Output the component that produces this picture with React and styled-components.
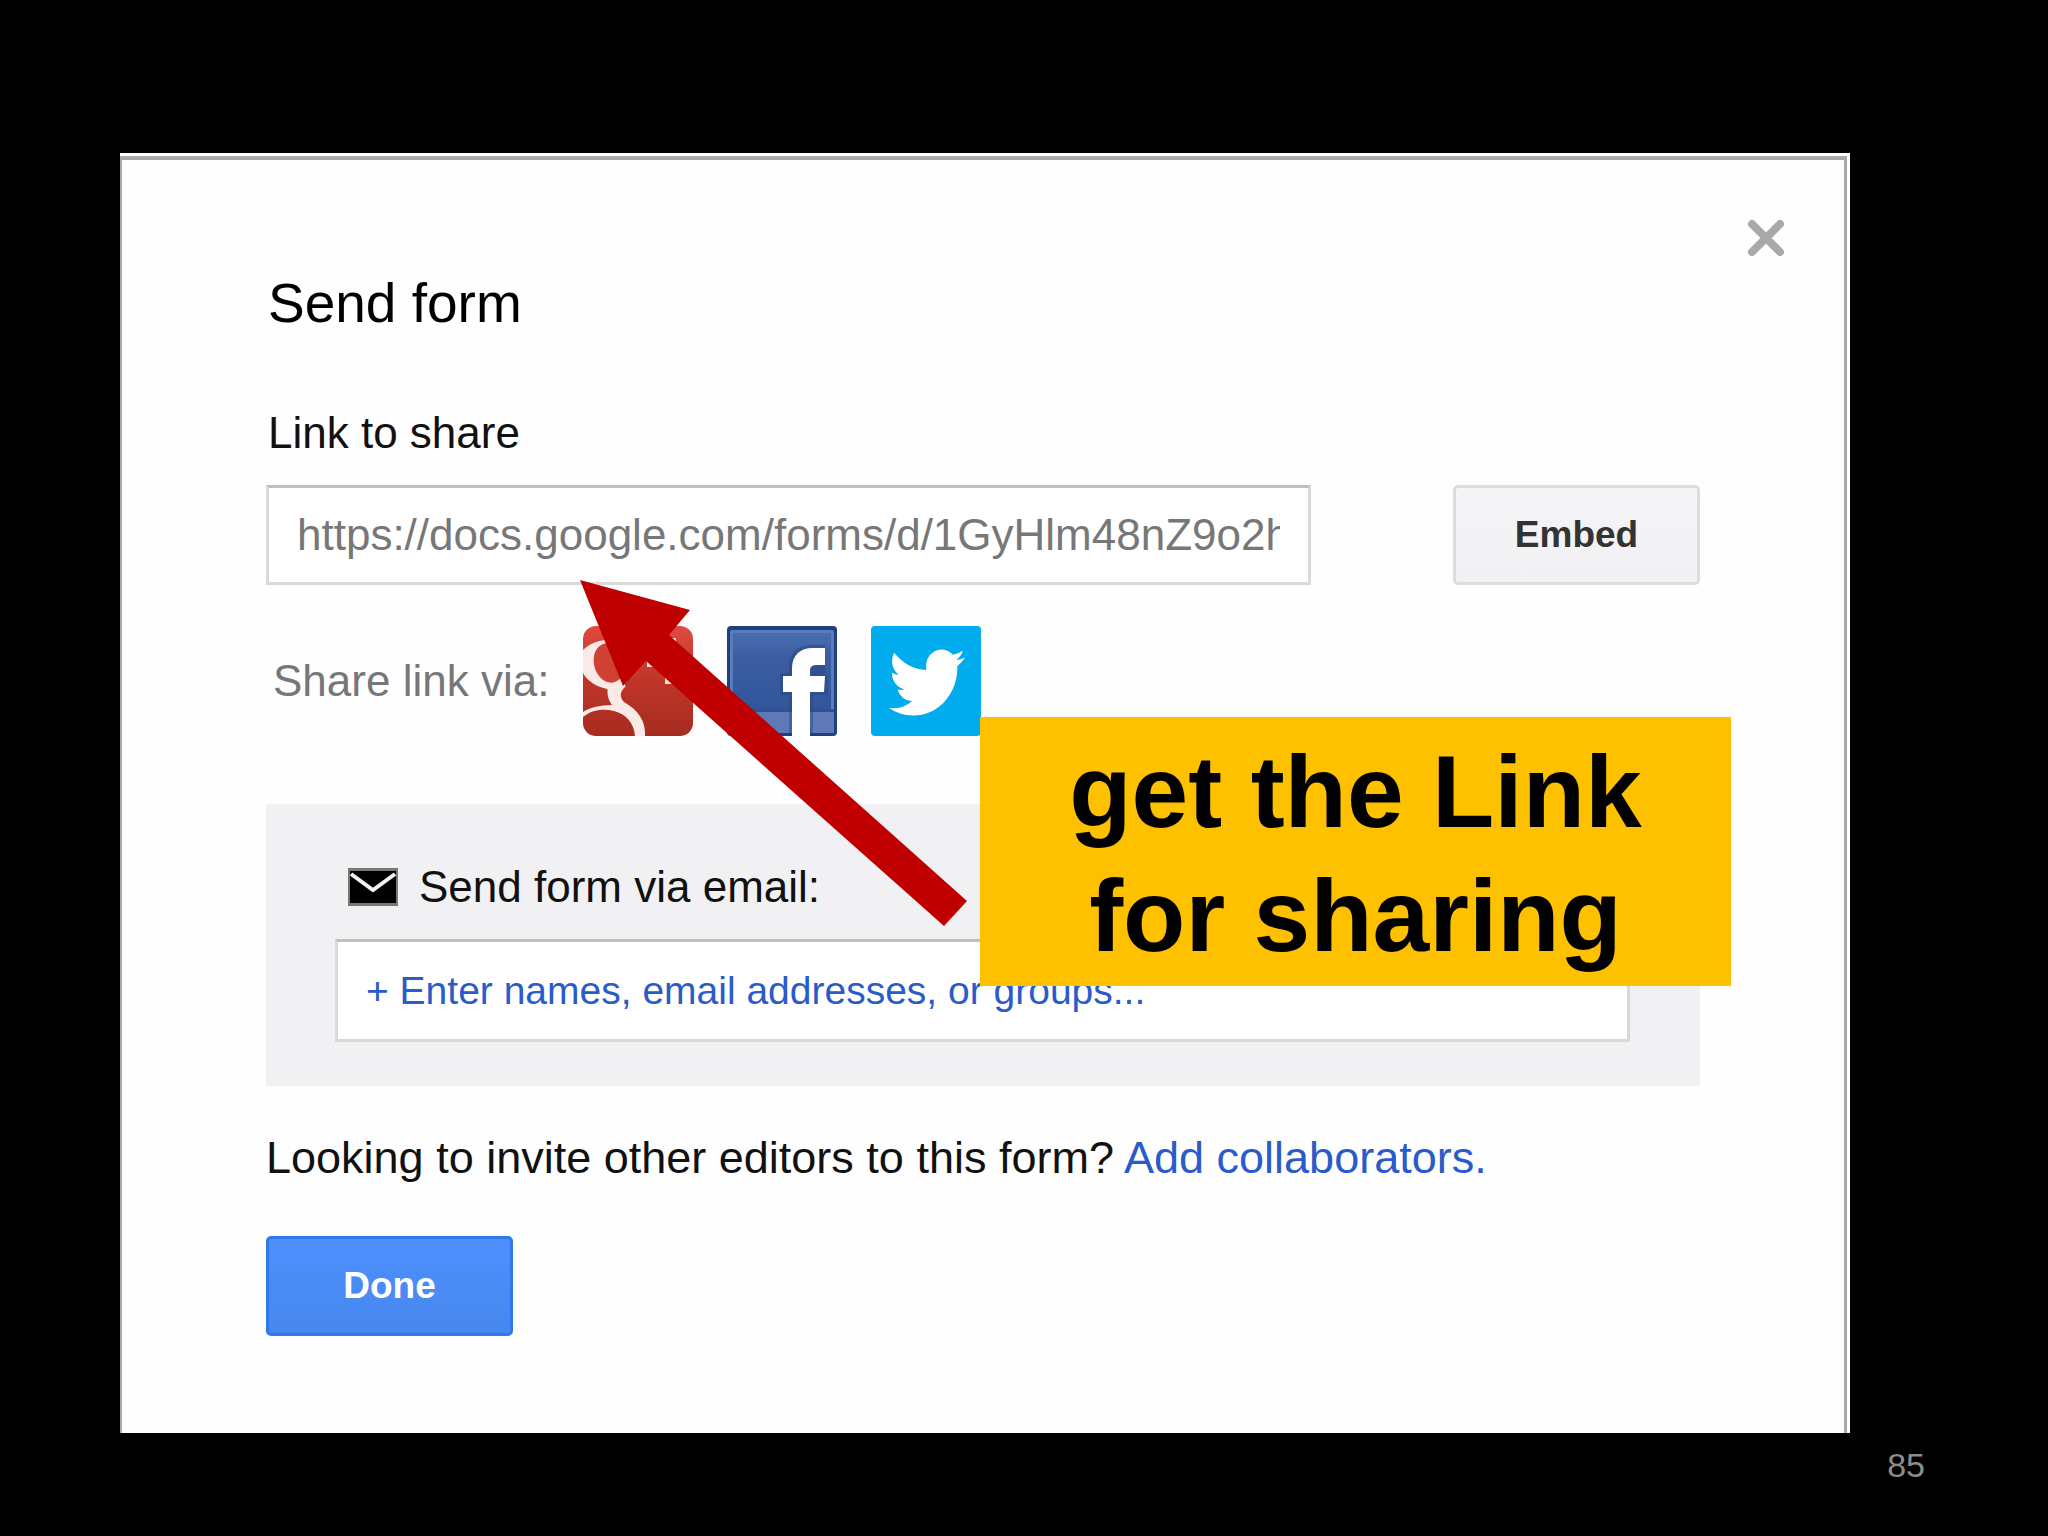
import React, { useState } from "react";
import styled, { createGlobalStyle } from "styled-components";

const GooglePlusIcon = () => (
  <svg viewBox="0 0 110 110" aria-hidden="true">
    <defs>
      <linearGradient id="gplus" x1="0" y1="0" x2="0" y2="1">
        <stop offset="0" stopColor="#e04a40" />
        <stop offset="0.5" stopColor="#be3528" />
        <stop offset="1" stopColor="#a62c20" />
      </linearGradient>
      <clipPath id="gplusClip">
        <rect width="110" height="110" rx="13" />
      </clipPath>
    </defs>
    <g clipPath="url(#gplusClip)">
      <rect width="110" height="110" fill="url(#gplus)" />
      <path
        d="M0 24C8 16 20 12 42 14V60C36 61 30 65 24 63C14 61 4 55 0 47Z"
        fill="#f9e9e7"
      />
      <ellipse
        cx="26"
        cy="37"
        rx="15"
        ry="20"
        transform="rotate(-15 26 37)"
        fill="#cf4035"
      />
      <path
        d="M25 60H43C37 65 36 71 41 76C55 84 63 95 62 110H52C51 97 43 88 31 85C20 82 8 84 0 91V86C6 82 16 79 29 79C24 72 24 66 25 60Z"
        fill="#f9e9e7"
      />
      <path d="M82 12H93V31H105V41H93V58H82V41H64V31H82Z" fill="#f9e9e7" />
    </g>
  </svg>
);

const FacebookIcon = () => (
  <svg viewBox="0 0 110 110" aria-hidden="true">
    <defs>
      <linearGradient id="fb" x1="0" y1="0" x2="0" y2="1">
        <stop offset="0" stopColor="#4a6db0" />
        <stop offset="0.3" stopColor="#3c5da2" />
        <stop offset="1" stopColor="#31569c" />
      </linearGradient>
    </defs>
    <rect width="110" height="110" rx="4" fill="#1f3f7e" />
    <rect x="3" y="4" width="104" height="103" rx="2" fill="#5b7cbb" />
    <rect x="6" y="7" width="98" height="76" fill="url(#fb)" />
    <rect x="3" y="83" width="104" height="3" fill="#2f5194" />
    <rect x="3" y="86" width="104" height="21" fill="#5f79b8" />
    <path
      d="M62 107V69H53V47H62V41C62 26 71 19 86 19H98V50H101V69H86V107Z"
      fill="#25437f"
      opacity="0.45"
    />
    <path
      d="M65 110V66H56V50H65V43C65 29 73 22 86 22H98V39H90C84 39 83 41 83 46V50H98L97 66H83V110Z"
      fill="#fff"
    />
  </svg>
);

const TwitterIcon = () => (
  <svg viewBox="0 0 110 110" aria-hidden="true">
    <rect width="110" height="110" rx="4" fill="#00aced" />
    <path
      transform="translate(18 16) scale(3.17 3.38)"
      fill="#fff"
      d="M23.953 4.57a10 10 0 01-2.825.775 4.958 4.958 0 002.163-2.723c-.951.555-2.005.959-3.127 1.184a4.92 4.92 0 00-8.384 4.482C7.69 8.095 4.067 6.13 1.64 3.162a4.822 4.822 0 00-.666 2.475c0 1.71.87 3.213 2.188 4.096a4.904 4.904 0 01-2.228-.616v.06a4.923 4.923 0 003.946 4.827 4.996 4.996 0 01-2.212.085 4.936 4.936 0 004.604 3.417 9.867 9.867 0 01-6.102 2.105c-.39 0-.779-.023-1.17-.067a13.995 13.995 0 007.557 2.209c9.053 0 13.998-7.496 13.998-13.985 0-.21 0-.42-.015-.63A9.935 9.935 0 0024 4.59z"
    />
  </svg>
);

const networks = [
  { name: "Google+", Icon: GooglePlusIcon },
  { name: "Facebook", Icon: FacebookIcon },
  { name: "Twitter", Icon: TwitterIcon },
];

const App = () => {
  const [emails, setEmails] = useState("");

  return (
    <Slide>
      <GlobalStyle />
      <Frame>
        <Dialog>
          <TopBar>
            <CloseButton type="button" aria-label="Close">
              <svg width="38" height="38" viewBox="0 0 38 38">
                <path
                  d="M5 5L33 33M33 5L5 33"
                  stroke="#a9a9a9"
                  strokeWidth="8"
                  strokeLinecap="round"
                />
              </svg>
            </CloseButton>
          </TopBar>
          <Body>
            <Title>Send form</Title>
            <Label htmlFor="link">Link to share</Label>
            <LinkRow>
              <LinkInput
                id="link"
                readOnly
                value="https://docs.google.com/forms/d/1GyHlm48nZ9o2h"
              />
              <Button type="button">Embed</Button>
            </LinkRow>
            <ShareRow>
              <ShareText>Share link via:</ShareText>
              {networks.map(({ name, Icon }) => (
                <ShareLink key={name} href="#" aria-label={name}>
                  <Icon />
                </ShareLink>
              ))}
            </ShareRow>
            <EmailBox>
              <EmailLabel htmlFor="emails">
                <svg width="50" height="42" viewBox="0 0 50 42">
                  <rect y="2" width="50" height="38" fill="#777" />
                  <rect x="2" y="5" width="46" height="32" fill="#000" />
                  <path
                    d="M3 8L25 24L47 8"
                    fill="none"
                    stroke="#f1f0f2"
                    strokeWidth="4"
                  />
                </svg>
                Send form via email:
              </EmailLabel>
              <EmailInput
                id="emails"
                value={emails}
                onChange={(e) => setEmails(e.target.value)}
                placeholder="+ Enter names, email addresses, or groups..."
              />
            </EmailBox>
            <Invite>
              Looking to invite other editors to this form?{" "}
              <InviteLink href="#">Add collaborators.</InviteLink>
            </Invite>
            <Button type="button" $primary>
              Done
            </Button>
          </Body>
        </Dialog>
        <Arrow viewBox="0 0 387 346" aria-hidden="true">
          <path d="M0 0L110 30L89 55L387 321L364 346L66 81L43 106Z" />
        </Arrow>
        <Callout>
          get the Link
          <br />
          for sharing
        </Callout>
      </Frame>
      <PageNumber>85</PageNumber>
    </Slide>
  );
};

export default App;

const GlobalStyle = createGlobalStyle`
  * {
    box-sizing: border-box;
  }

  body {
    margin: 0;
    background-color: #000;
    font-family: "Liberation Sans", Arial, sans-serif;
  }

  button, input {
    font-family: inherit;
  }
`;

const Slide = styled.main`
  min-height: 100vh;
  padding: 153px 198px 0 120px;
  background-color: #000;
`;

const Frame = styled.div`
  position: relative;
  padding: 3px 3px 0 0;
  background-color: #fff;
`;

const Dialog = styled.section`
  border: solid #a9a9a9;
  border-width: 4px 3px 0 2px;
  background-color: #fefefe;
`;

const TopBar = styled.div`
  display: flex;
  justify-content: flex-end;
  padding: 59px 59px 0 0;
`;

const CloseButton = styled.button`
  display: flex;
  padding: 0;
  border: none;
  background: none;
  cursor: pointer;
`;

const Body = styled.div`
  padding: 16px 144px 97px;
`;

const Title = styled.h1`
  margin: 0 0 75px;
  padding-left: 2px;
  font-size: 55px;
  font-weight: 400;
  line-height: 60px;
  color: #000;
`;

const Label = styled.label`
  display: block;
  padding-left: 2px;
  font-size: 44px;
  line-height: 50px;
  color: #111;
`;

const LinkRow = styled.div`
  display: flex;
  justify-content: space-between;
  margin-top: 27px;
`;

const Input = styled.input`
  border: 3px solid #d9d9d9;
  border-top-color: #c0c0c0;
  border-radius: 0;
  outline: none;
  background-color: #fff;
`;

const LinkInput = styled(Input)`
  flex: 0 1 1045px;
  min-width: 0;
  height: 100px;
  padding: 0 28px;
  font-size: 44px;
  color: #777;
`;

const Button = styled.button`
  width: 247px;
  height: 100px;
  border: 3px solid ${(props) => (props.$primary ? "#3079ed" : "#dcdcdc")};
  border-radius: 5px;
  font-size: 37px;
  font-weight: 700;
  color: ${(props) => (props.$primary ? "#fff" : "#333")};
  background: ${(props) =>
    props.$primary
      ? "linear-gradient(#4d90fe, #4787ed)"
      : "linear-gradient(#f5f4f6, #f1f0f2)"};
  cursor: pointer;
`;

const ShareRow = styled.div`
  display: flex;
  align-items: center;
  gap: 34px;
  margin-top: 41px;
  padding-left: 7px;
`;

const ShareText = styled.span`
  font-size: 44px;
  line-height: 50px;
  color: #777;
`;

const ShareLink = styled.a`
  display: block;
  width: 110px;
  height: 110px;
`;

const EmailBox = styled.div`
  margin-top: 68px;
  padding: 58px 70px 44px 69px;
  background-color: #f1f0f2;
`;

const EmailLabel = styled(Label)`
  display: flex;
  align-items: center;
  gap: 21px;
  padding-left: 13px;
`;

const EmailInput = styled(Input)`
  display: block;
  width: 100%;
  height: 103px;
  margin-top: 27px;
  padding: 0 28px;
  font-size: 39px;

  &::placeholder {
    color: #2a5bcb;
    opacity: 1;
  }
`;

const Invite = styled.p`
  margin: 47px 0 53px;
  font-size: 45px;
  line-height: 50px;
  color: #111;
`;

const InviteLink = styled.a`
  color: #2a5bcb;
  text-decoration: none;
`;

/* annotations laid over the dialog */
const Arrow = styled.svg`
  position: absolute;
  top: 427px;
  left: 460px;
  width: 387px;
  height: 346px;
  fill: #c00000;
`;

const Callout = styled.div`
  position: absolute;
  top: 564px;
  left: 860px;
  width: 751px;
  padding: 13px 0 8px;
  font-size: 102px;
  font-weight: 700;
  line-height: 124px;
  text-align: center;
  color: #000;
  background-color: #fdc100;
`;

const PageNumber = styled.footer`
  margin: 12px -75px 0 0;
  font-size: 34px;
  line-height: 40px;
  text-align: right;
  color: #8c8c8c;
`;
